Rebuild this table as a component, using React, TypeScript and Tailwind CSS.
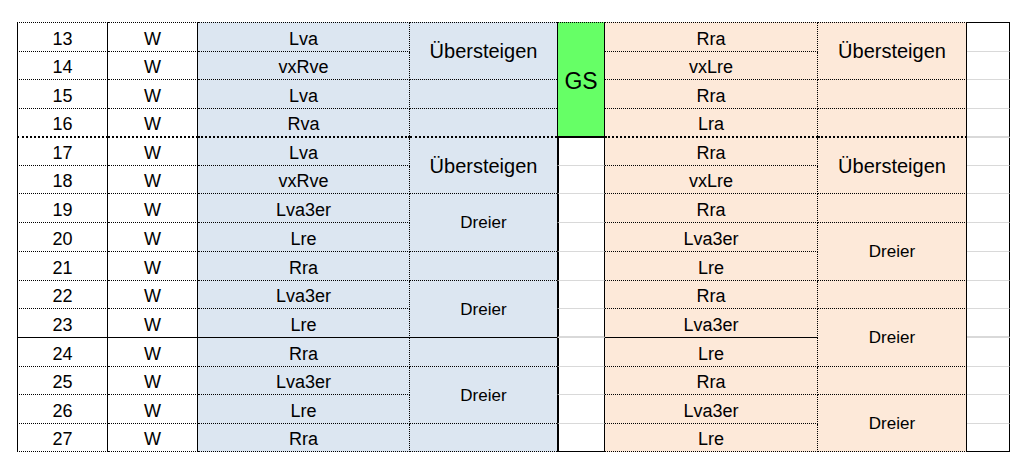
const ROW = [
  "row-start-1", "row-start-2", "row-start-3", "row-start-4", "row-start-5",
  "row-start-6", "row-start-7", "row-start-8", "row-start-9", "row-start-10",
  "row-start-11", "row-start-12", "row-start-13", "row-start-14", "row-start-15",
];
const SPAN: Record<number, string> = { 1: "row-span-1", 2: "row-span-2", 4: "row-span-4" };
const COL = ["col-start-1", "col-start-2", "col-start-3", "col-start-4", "col-start-5", "col-start-6", "col-start-7", "col-start-8"];

const left = ["Lva", "vxRve", "Lva", "Rva", "Lva", "vxRve", "Lva3er", "Lre", "Rra", "Lva3er", "Lre", "Rra", "Lva3er", "Lre", "Rra"];
const right = ["Rra", "vxLre", "Rra", "Lra", "Rra", "vxLre", "Rra", "Lva3er", "Lre", "Rra", "Lva3er", "Lre", "Rra", "Lva3er", "Lre"];

type Seg = { row: number; span: number; text?: string };

const leftMerged: Seg[] = [
  { row: 0, span: 2, text: "Übersteigen" },
  { row: 2, span: 1 },
  { row: 3, span: 1 },
  { row: 4, span: 2, text: "Übersteigen" },
  { row: 6, span: 2, text: "Dreier" },
  { row: 8, span: 1 },
  { row: 9, span: 2, text: "Dreier" },
  { row: 11, span: 1 },
  { row: 12, span: 2, text: "Dreier" },
  { row: 14, span: 1 },
];

const rightMerged: Seg[] = [
  { row: 0, span: 2, text: "Übersteigen" },
  { row: 2, span: 1 },
  { row: 3, span: 1 },
  { row: 4, span: 2, text: "Übersteigen" },
  { row: 6, span: 1 },
  { row: 7, span: 2, text: "Dreier" },
  { row: 9, span: 1 },
  { row: 10, span: 2, text: "Dreier" },
  { row: 12, span: 1 },
  { row: 13, span: 2, text: "Dreier" },
];

// bottom edge of a dotted-grid cell: double dotted after row 16, solid after row 23
const bottom = (end: number) => {
  if (end === 3) return "border-b-2 [border-bottom-style:dotted]!";
  if (end === 10) return "border-b";
  return "border-b [border-bottom-style:dotted]!";
};

const Cell = ({
  col,
  row,
  span = 1,
  className = "",
  children,
}: {
  col: number;
  row: number;
  span?: number;
  className?: string;
  children?: React.ReactNode;
}) => (
  <div
    className={`${COL[col]} ${ROW[row]} ${SPAN[span]} border-black ${row === 0 ? "border-t [border-top-style:dotted]!" : ""} ${className}`}
  >
    {children}
  </div>
);

const single = "flex items-end justify-center pb-[2px] text-[18px] leading-[20px]";
const merged = "flex items-center justify-center leading-none";

const mergedText = (t?: string) =>
  t === "Übersteigen" ? (
    <span className="text-[20px]">{t}</span>
  ) : t ? (
    <span className="text-[17px]">{t}</span>
  ) : null;

export default function App() {
  const rows = Array.from({ length: 15 }, (_, i) => i);

  return (
    <div className="h-[468px] w-[1028px] bg-white pt-[22px] pl-[17px] text-black font-['Liberation_Sans',Arial,sans-serif]">
      <div className="grid grid-cols-[91px_90px_212px_147px_48px_213px_149px_43px] grid-rows-[30px_28px_29px_29px_28px_28px_29px_29px_29px_28px_29px_29px_28px_29px_28px] w-max">
        {/* number column */}
        {rows.map((r) => (
          <Cell key={`n${r}`} col={0} row={r} className={`border-l border-r ${bottom(r)} ${single}`}>
            {r + 13}
          </Cell>
        ))}

        {/* W column */}
        {rows.map((r) => (
          <Cell key={`w${r}`} col={1} row={r} className={`border-r ${bottom(r)} ${single}`}>
            W
          </Cell>
        ))}

        {/* left moves */}
        {rows.map((r) => (
          <Cell
            key={`l${r}`}
            col={2}
            row={r}
            className={`bg-[#dce6f1] border-r [border-right-style:dotted]! ${bottom(r)} ${single}`}
          >
            {left[r]}
          </Cell>
        ))}

        {leftMerged.map((s) => (
          <Cell
            key={`lm${s.row}`}
            col={3}
            row={s.row}
            span={s.span}
            className={`bg-[#dce6f1] ${bottom(s.row + s.span - 1)} ${merged}`}
          >
            {mergedText(s.text)}
          </Cell>
        ))}

        {/* GS column */}
        <Cell
          col={4}
          row={0}
          span={4}
          className={`bg-[#66ff66] border-l border-r border-b-2 ${merged} text-[23px]`}
        >
          <span className="translate-y-[2px]">GS</span>
        </Cell>
        {rows.slice(4).map((r) => (
          <div
            key={`g${r}`}
            className={`${COL[4]} ${ROW[r]} bg-white border-l-2 border-r border-black ${
              r === 14 ? "border-b" : r === 10 ? "border-b-2 border-b-[#d9d9d9]" : "border-b border-b-[#d9d9d9]"
            }`}
          />
        ))}

        {/* right moves */}
        {rows.map((r) => (
          <Cell
            key={`r${r}`}
            col={5}
            row={r}
            className={`bg-[#fde9d9] border-r [border-right-style:dotted]! ${bottom(r)} ${single}`}
          >
            {right[r]}
          </Cell>
        ))}

        {rightMerged.map((s) => (
          <Cell
            key={`rm${s.row}`}
            col={6}
            row={s.row}
            span={s.span}
            className={`bg-[#fde9d9] border-r ${bottom(s.row + s.span - 1)} ${merged}`}
          >
            {mergedText(s.text)}
          </Cell>
        ))}

        {/* empty last column */}
        {rows.map((r) => (
          <div
            key={`e${r}`}
            className={`${COL[7]} ${ROW[r]} bg-white border-r border-black ${r === 0 ? "border-t" : ""} ${
              r === 14
                ? "border-b"
                : r === 3 || r === 10
                ? "border-b-2 border-b-[#d9d9d9]"
                : "border-b border-b-[#d9d9d9]"
            }`}
          />
        ))}
      </div>
    </div>
  );
}
